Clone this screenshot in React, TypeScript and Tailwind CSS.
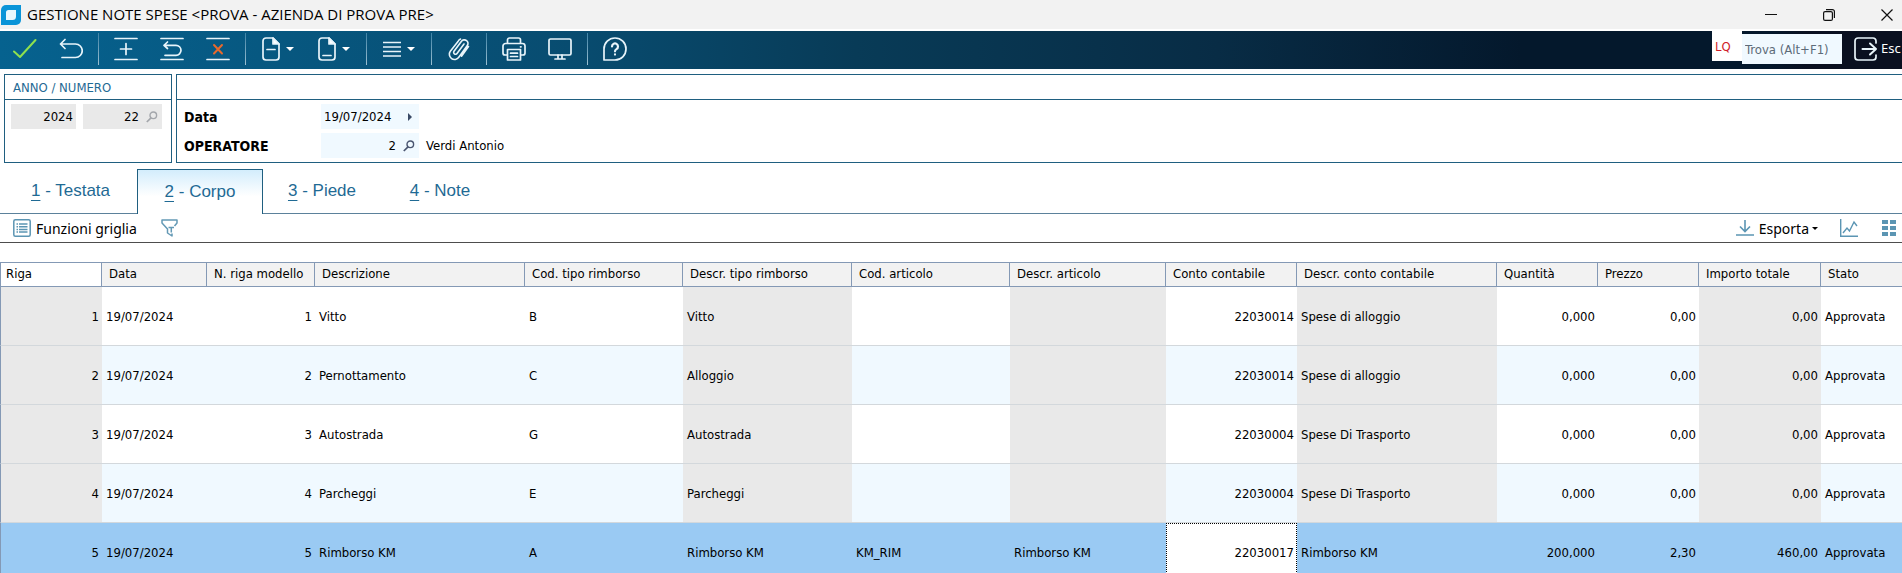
import { ReactNode } from 'react';

type Row = {
  riga: number;
  descrizione: string;
  codTipo: string;
  descrTipo: string;
  codArticolo: string;
  descrArticolo: string;
  conto: string;
  descrConto: string;
  quantita: string;
  prezzo: string;
  importo: string;
};

const rows: Row[] = [
  { riga: 1, descrizione: 'Vitto', codTipo: 'B', descrTipo: 'Vitto', codArticolo: '', descrArticolo: '', conto: '22030014', descrConto: 'Spese di alloggio', quantita: '0,000', prezzo: '0,00', importo: '0,00' },
  { riga: 2, descrizione: 'Pernottamento', codTipo: 'C', descrTipo: 'Alloggio', codArticolo: '', descrArticolo: '', conto: '22030014', descrConto: 'Spese di alloggio', quantita: '0,000', prezzo: '0,00', importo: '0,00' },
  { riga: 3, descrizione: 'Autostrada', codTipo: 'G', descrTipo: 'Autostrada', codArticolo: '', descrArticolo: '', conto: '22030004', descrConto: 'Spese Di Trasporto', quantita: '0,000', prezzo: '0,00', importo: '0,00' },
  { riga: 4, descrizione: 'Parcheggi', codTipo: 'E', descrTipo: 'Parcheggi', codArticolo: '', descrArticolo: '', conto: '22030004', descrConto: 'Spese Di Trasporto', quantita: '0,000', prezzo: '0,00', importo: '0,00' },
  { riga: 5, descrizione: 'Rimborso KM', codTipo: 'A', descrTipo: 'Rimborso KM', codArticolo: 'KM_RIM', descrArticolo: 'Rimborso KM', conto: '22030017', descrConto: 'Rimborso KM', quantita: '200,000', prezzo: '2,30', importo: '460,00' },
];

const columns = [
  { label: 'Riga', width: 'w-[102px]' },
  { label: 'Data', width: 'w-[105px]' },
  { label: 'N. riga modello', width: 'w-[108px]' },
  { label: 'Descrizione', width: 'w-[210px]' },
  { label: 'Cod. tipo rimborso', width: 'w-[158px]' },
  { label: 'Descr. tipo rimborso', width: 'w-[169px]' },
  { label: 'Cod. articolo', width: 'w-[158px]' },
  { label: 'Descr. articolo', width: 'w-[156px]' },
  { label: 'Conto contabile', width: 'w-[131px]' },
  { label: 'Descr. conto contabile', width: 'w-[200px]' },
  { label: 'Quantità', width: 'w-[101px]' },
  { label: 'Prezzo', width: 'w-[101px]' },
  { label: 'Importo totale', width: 'w-[122px]' },
  { label: 'Stato', width: '' },
];

const tabs = ['Testata', 'Corpo', 'Piede', 'Note'];

function Icon({ children, className = 'w-6' }: { children: ReactNode; className?: string }) {
  return (
    <svg
      viewBox={className === 'w-6' ? '0 0 24 24' : '0 0 18 24'}
      className={`${className} h-6 shrink-0`}
      fill="none"
      stroke="#e8f4fa"
      strokeWidth="1.7"
      strokeLinecap="round"
      strokeLinejoin="round"
    >
      {children}
    </svg>
  );
}

function ToolButton({ label, children }: { label: string; children: ReactNode }) {
  return (
    <button aria-label={label} className="flex h-full w-[46px] items-center justify-center">
      {children}
    </button>
  );
}

function MenuButton({ label, children }: { label: string; children: ReactNode }) {
  return (
    <button aria-label={label} className="flex h-full w-14 items-center justify-center gap-1.5">
      {children}
      <svg viewBox="0 0 8 4" className="h-1 w-2" fill="#fff">
        <path d="M0 0h8L4 4z" />
      </svg>
    </button>
  );
}

function Separator() {
  return <div className="mx-1 h-8 w-px bg-linear-to-b from-[#3d83a6] to-[#9cc0d2]" />;
}

function Magnifier({ color }: { color: string }) {
  return (
    <svg viewBox="0 0 12 12" className="h-3 w-3 shrink-0" fill="none" stroke={color} strokeWidth="1.4">
      <circle cx="7.3" cy="4.3" r="3.3" />
      <path d="M5 6.8.8 11" strokeWidth="1.7" />
    </svg>
  );
}

function TitleBar() {
  return (
    <header className="flex h-[29px] items-center bg-[#f2f2f2]">
      <svg viewBox="0 0 20 20" className="ml-px h-5 w-5">
        <path d="M5 0h15v15a5 5 0 0 1-5 5H0V5a5 5 0 0 1 5-5z" fill="#0a94d8" />
        <path d="M7.500 5h7.500v6.500a3.500 3.500 0 0 1-3.500 3.500H5V7.500A2.500 2.500 0 0 1 7.500 5z" fill="#e9f7fd" />
      </svg>
      <h1 className="ml-1.5 font-['Open_Sans','Noto_Sans',sans-serif] text-[15px]">GESTIONE NOTE SPESE &lt;PROVA - AZIENDA DI PROVA PRE&gt;</h1>
      <div className="ml-auto flex items-center gap-7">
        <button aria-label="Riduci a icona" className="flex w-[30px] justify-center">
          <svg viewBox="0 0 12 12" className="h-3 w-3" stroke="#111"><path d="M0 5.500h12" /></svg>
        </button>
        <button aria-label="Ripristina" className="flex w-[30px] justify-center">
          <svg viewBox="0 0 12 12" className="h-3 w-3" stroke="#111" strokeWidth="1.2" fill="none">
            <rect x=".6" y="2.600" width="8.800" height="8.800" rx="1.500" />
            <path d="M3 .6h6.400a2 2 0 0 1 2 2V9" />
          </svg>
        </button>
        <button aria-label="Chiudi" className="flex w-[30px] justify-center">
          <svg viewBox="0 0 12 12" className="h-3 w-3" stroke="#111" strokeWidth="1.200"><path d="m.5.5 11 11M11.500.5l-11 11" /></svg>
        </button>
      </div>
    </header>
  );
}

function Toolbar() {
  return (
    <div className="mt-0.5 flex h-[38px] items-start bg-[linear-gradient(90deg,#06628f_0%,#084c70_30%,#083b57_45%,#082c45_64%,#04182c_80%,#04182c_93%,#0a1020_95%)]">
      <div className="flex h-9 items-center pl-0.5">
        <ToolButton label="Conferma">
          <Icon><path d="M1 14.500 7 20 22.500 3" stroke="#8fe04e" strokeWidth="2" /></Icon>
        </ToolButton>
        <ToolButton label="Annulla">
          <Icon><path d="M6 2.500 1.500 7 6 11.500M2 7h14.500a6.500 6.500 0 0 1 0 13.500H3" /></Icon>
        </ToolButton>
        <Separator />
        <ToolButton label="Inserisci riga">
          <Icon><path d="M1 1.500h22M1 22.500h22M12 6.500v11M6.500 12h11" /></Icon>
        </ToolButton>
        <ToolButton label="Ripristina riga">
          <Icon><path d="M1 1.500h22M1 22.500h22M7.500 5 4 8.300 7.500 11.500M4.500 8.300H16a5 5 0 0 1 0 10H5" /></Icon>
        </ToolButton>
        <ToolButton label="Elimina riga">
          <Icon>
            <path d="M1 1.500h22M1 22.500h22" />
            <path d="m8 8 8 8.500M16 8l-8 8.500" stroke="#e8692c" strokeWidth="2" />
          </Icon>
        </ToolButton>
        <Separator />
        <MenuButton label="Documento">
          <Icon className="w-[18px]">
            <path d="M11 1H4a3 3 0 0 0-3 3v16a3 3 0 0 0 3 3h10a3 3 0 0 0 3-3V7zM5 12.500h8" />
            <path d="M11 1v6h6z" fill="#fff" />
          </Icon>
        </MenuButton>
        <MenuButton label="Allegato">
          <Icon className="w-[18px]">
            <path d="M11 1H4a3 3 0 0 0-3 3v16a3 3 0 0 0 3 3h10a3 3 0 0 0 3-3V7zM5 18.500h8" />
            <path d="M11 1v6h6z" fill="#fff" />
          </Icon>
        </MenuButton>
        <Separator />
        <MenuButton label="Menu">
          <Icon className="w-[18px]"><path d="M0 5.500h18M0 10h18M0 14.500h18M0 19h18" /></Icon>
        </MenuButton>
        <Separator />
        <ToolButton label="Allegati">
          <Icon>
            <path
              d="m17 7-7 9.500a1.800 1.800 0 0 1-3-2.200l7.500-10a3.600 3.600 0 0 1 5.800 4.300l-8.500 11.700a5.200 5.200 0 0 1-8.500-6L11 4.500a5 5 0 0 1 2.500-2.500M21.500 9.500l-7 9.700"
              strokeWidth="1.600"
            />
          </Icon>
        </ToolButton>
        <Separator />
        <ToolButton label="Stampa">
          <Icon>
            <path d="M5.500 6.500V3a2 2 0 0 1 2-2h9a2 2 0 0 1 2 2v3.500M5 18H3a2 2 0 0 1-2-2V9a2.500 2.500 0 0 1 2.500-2.500h17A2.500 2.500 0 0 1 23 9v7a2 2 0 0 1-2 2h-2M5.500 12.500h13V23h-13zM8.500 16.200h7M8.500 19.500h7M18.500 9.800h.5" />
          </Icon>
        </ToolButton>
        <ToolButton label="Anteprima">
          <Icon>
            <rect x="1" y="2" width="22" height="16" rx="1.500" />
            <path d="M10 18v3.500M14 18v3.500M7 22h10" />
          </Icon>
        </ToolButton>
        <Separator />
        <ToolButton label="Aiuto">
          <Icon>
            <path d="M1 23V12a11 11 0 1 1 11 11z" />
            <path d="M9 9.500a3 3 0 1 1 4.500 2.600c-1 .6-1.500 1-1.500 2.200M12 17.400v.2" strokeWidth="2.200" />
          </Icon>
        </ToolButton>
      </div>
      <div className="ml-auto flex h-9 shrink-0 items-start">
        <span className="h-[30px] w-[30px] bg-white pl-[3px] pt-1.5 text-[13px] leading-5 text-[#d01c28]">LQ</span>
        <input
          aria-label="Trova"
          placeholder="Trova (Alt+F1)"
          className="mt-[3px] h-[30px] w-[100px] bg-[#f0f9ff] pl-[3px] text-[13px] placeholder:text-[#5d6b78]"
        />
        <button className="ml-3 flex h-full w-12 items-center gap-[3px] font-['Noto_Sans',sans-serif] text-[13px] text-white">
          <Icon>
            <path d="M22 6V4a3 3 0 0 0-3-3H4a3 3 0 0 0-3 3v16a3 3 0 0 0 3 3h15a3 3 0 0 0 3-3v-2" />
            <path d="M8.500 12H22M16 6.500 22 12l-6 5.500" strokeWidth="2" />
          </Icon>
          Esc
        </button>
      </div>
    </div>
  );
}

function HeaderPanels() {
  return (
    <div className="mt-[5px] flex h-[89px] gap-1 pl-1 text-[13px]">
      <fieldset className="w-[168px] border border-[#1f5f80]">
        <div className="flex h-[25px] items-center border-b border-[#1f5f80] pl-2 pt-0.5 text-[#1f6a94]">ANNO / NUMERO</div>
        <div className="mt-1 flex gap-[7px] pl-1.5">
          <input aria-label="Anno" defaultValue="2024" className="h-[25px] w-[65px] bg-[#e9e9e9] pr-[3px] text-right" />
          <div className="flex h-[25px] w-[79px] items-center bg-[#e9e9e9] pr-1">
            <input aria-label="Numero" defaultValue="22" className="w-14 text-right" />
            <button aria-label="Cerca numero" className="ml-auto">
              <Magnifier color="#a3a6ab" />
            </button>
          </div>
        </div>
      </fieldset>
      <fieldset className="min-w-0 flex-1 border border-r-0 border-[#1f5f80]">
        <div className="h-[25px] border-b border-[#1f5f80]" />
        <div className="mt-1 flex items-center pl-[7px]">
          <label htmlFor="data" className="w-[137px] pt-px text-[14px] font-bold">Data</label>
          <div className="flex h-[25px] w-[98px] items-center bg-[#f0f9ff]">
            <input id="data" defaultValue="19/07/2024" className="w-20 pl-[3px]" />
            <button aria-label="Scegli data" className="ml-[7px]">
              <svg viewBox="0 0 4 8" className="h-2 w-1" fill="#3a4a66"><path d="M0 0v8l4-4z" /></svg>
            </button>
          </div>
        </div>
        <div className="mt-1 flex items-center pl-[7px]">
          <label htmlFor="operatore" className="w-[137px] pt-px text-[14px] font-bold">OPERATORE</label>
          <div className="flex h-[25px] w-[98px] items-center bg-[#f0f9ff] pr-1">
            <input id="operatore" defaultValue="2" className="w-[75px] text-right" />
            <button aria-label="Cerca operatore" className="ml-auto">
              <Magnifier color="#4a5570" />
            </button>
          </div>
          <span className="ml-[7px]">Verdi Antonio</span>
        </div>
      </fieldset>
    </div>
  );
}

function Tabs() {
  return (
    <nav className="mt-1.5 flex h-[45px] font-['Liberation_Sans',sans-serif] text-[17px] text-[#1f6a94]">
      <div className="w-1 border-b border-[#5b819b]" />
      {tabs.map((tab, i) => (
        <button
          key={tab}
          className={
            tab === 'Corpo'
              ? 'w-[126px] border border-b-0 border-[#1f5f80] bg-linear-to-b from-[#d3edfc] to-white to-60%'
              : tab === 'Testata'
                ? 'w-[133px] border-b border-[#5b819b]'
                : 'w-[118px] border-b border-[#5b819b]'
          }
        >
          <span className="underline underline-offset-4">{i + 1}</span> - {tab}
        </button>
      ))}
      <div className="flex-1 border-b border-[#5b819b]" />
    </nav>
  );
}

function GridTools() {
  return (
    <div className="flex h-[29px] items-center border-b border-[#4d4d4d] pl-[13px] font-['Noto_Sans',sans-serif] text-[14px]">
      <button className="flex items-center gap-[5px]">
        <svg viewBox="0 0 18 18" className="h-[18px] w-[18px]" fill="none" stroke="#5b95b3" strokeWidth="1.500">
          <rect x=".8" y=".8" width="16.400" height="16.400" rx="1.500" />
          <path d="M3.500 5h1.500M3.500 7.700h1.500M3.500 10.400h1.500M3.500 13.100h1.500M6 5h8.500M6 7.700h8.500M6 10.400h8.500M6 13.100h8.500" />
        </svg>
        Funzioni griglia
      </button>
      <button aria-label="Filtro" className="ml-6">
        <svg viewBox="0 0 17 18" className="h-[18px] w-[17px]" fill="none" stroke="#6399b5" strokeWidth="1.500" strokeLinejoin="round">
          <path d="M11 14.500V17l-4.500-3v-4L1 4V1h15v3l-2.500 3M7.500 8.500h5.500M10.300 8.500v5" />
        </svg>
      </button>
      <div className="ml-auto flex items-center">
        <button className="flex items-center gap-[5px]">
          <svg viewBox="0 0 18 16" className="h-4 w-[18px]" fill="none" stroke="#5b95b3" strokeWidth="1.600">
            <path d="M9 0v11M4 6.500 9 11.500l5-5M0 15h18" />
          </svg>
          <span>Esporta</span>
          <svg viewBox="0 0 6 3" className="-ml-0.5 h-[3px] w-1.5"><path d="M0 0h6L3 3z" /></svg>
        </button>
        <button aria-label="Grafico" className="ml-[22px]">
          <svg viewBox="0 0 18 18" className="h-[18px] w-[18px]" fill="none" stroke="#5b95b3" strokeWidth="1.400">
            <path d="M.7 0v17.300H18M3 14l4-5 2.500 3L14 3l3 4" />
          </svg>
        </button>
        <button aria-label="Vista a schede" className="ml-6 mr-1.5">
          <svg viewBox="0 0 14 16" className="h-4 w-3.5" fill="#5b95b3">
            <path d="M0 0h6v4H0zM8 0h6v4H8zM0 6h6v4H0zM8 6h6v4H8zM0 12h6v4H0zM8 12h6v4H8z" />
          </svg>
        </button>
      </div>
    </div>
  );
}

function GridRow({ row, index }: { row: Row; index: number }) {
  const selected = row.riga === 5;
  const locked = selected ? '' : 'bg-[#e9e9e9]';
  const color = selected ? 'bg-[#9acaf3]' : index % 2 ? 'bg-[#f0f9ff]' : 'bg-white';

  return (
    <tr className={`${color} h-[59px] *:border-b *:border-b-[#d3d8dc] *:pb-0 *:pl-1 *:pr-[3px] *:pt-0.5`}>
      <td className={`${locked} border-l border-l-[#8499b5] text-right`}>{row.riga}</td>
      <td>19/07/2024</td>
      <td className="text-right">{row.riga}</td>
      <td>{row.descrizione}</td>
      <td>{row.codTipo}</td>
      <td className={locked}>{row.descrTipo}</td>
      <td>{row.codArticolo}</td>
      <td className={locked}>{row.descrArticolo}</td>
      <td className={selected ? 'bg-white text-right outline-1 -outline-offset-1 outline-dotted outline-black' : 'text-right'}>{row.conto}</td>
      <td className={locked}>{row.descrConto}</td>
      <td className="text-right">{row.quantita}</td>
      <td className="text-right">{row.prezzo}</td>
      <td className={`${locked} text-right`}>{row.importo}</td>
      <td>Approvata</td>
    </tr>
  );
}

export default function App() {
  return (
    <div className="h-screen overflow-hidden bg-white font-['DejaVu_Sans_Condensed','DejaVu_Sans',sans-serif] text-black">
      <TitleBar />
      <Toolbar />
      <HeaderPanels />
      <Tabs />
      <GridTools />
      <table className="mt-[19px] w-full table-fixed border-separate border-spacing-0 text-[13px]">
        <thead>
          <tr className="h-[25px]">
            {columns.map((col, i) => (
              <th
                key={col.label}
                className={`${col.width} ${i === 0 ? 'border-l bg-white pl-[5px]' : 'bg-[#f2f2f2] pl-[7px]'} whitespace-nowrap border-y border-r border-[#8499b5] pb-0.5 pt-0 text-left leading-5 font-normal last:border-r-0`}
              >
                {col.label}
              </th>
            ))}
          </tr>
        </thead>
        <tbody>
          {rows.map((row, i) => (
            <GridRow key={row.riga} row={row} index={i} />
          ))}
        </tbody>
      </table>
    </div>
  );
}
